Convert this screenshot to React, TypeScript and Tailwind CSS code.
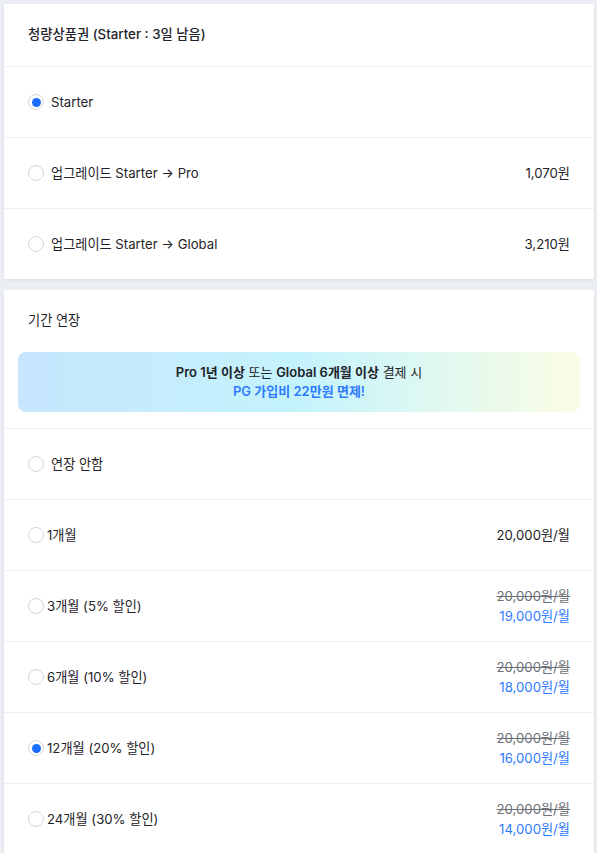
import React from 'react';

type Opt = { label: string; price?: string; original?: string; sale?: string; checked?: boolean; tight?: boolean };

const upgrades: Opt[] = [
  { label: 'Starter', checked: true },
  { label: '업그레이드 Starter → Pro', price: '1,070원' },
  { label: '업그레이드 Starter → Global', price: '3,210원' },
];

const periods: Opt[] = [
  { label: '연장 안함' },
  { label: '1개월', price: '20,000원/월', tight: true },
  { label: '3개월 (5% 할인)', original: '20,000원/월', sale: '19,000원/월', tight: true },
  { label: '6개월 (10% 할인)', original: '20,000원/월', sale: '18,000원/월', tight: true },
  { label: '12개월 (20% 할인)', original: '20,000원/월', sale: '16,000원/월', checked: true, tight: true },
  { label: '24개월 (30% 할인)', original: '20,000원/월', sale: '14,000원/월', tight: true },
];

const Radio = ({ checked }: { checked?: boolean }) => (
  <span className="flex h-4 w-4 shrink-0 items-center justify-center rounded-full border border-[#d4d8de] bg-white">
    {checked && <span className="h-[9px] w-[9px] rounded-full bg-[#1a6dff]" />}
  </span>
);

const Row = ({ o }: { o: Opt }) => (
  <div className="flex h-[71px] items-center justify-between border-t border-[#eceef1] px-6 text-[13.2px] leading-5">
    <div className={`flex items-center ${o.tight ? 'gap-[3px]' : 'gap-[7px]'}`}>
      <Radio checked={o.checked} />
      <span className="text-[#1f2329]">{o.label}</span>
    </div>
    {o.price && <span className="text-[#1f2329]">{o.price}</span>}
    {o.sale && (
      <div className="flex flex-col items-end">
        <span className="text-[#6b6f76] line-through">{o.original}</span>
        <span className="text-[#2f7bff]">{o.sale}</span>
      </div>
    )}
  </div>
);

export default function App() {
  return (
    <div
      className="min-h-screen bg-[#ebeef3] pl-1 pr-[3px] pt-1 pb-4"
      style={{ fontFamily: 'Inter, "Noto Sans CJK KR", sans-serif' }}
    >
      <section className="bg-white shadow-[0_1px_3px_rgba(0,0,0,0.08)]">
        <div className="flex h-[62px] items-center px-6">
          <span className="text-[13.3px] font-medium text-[#1f2329]">청량상품권 (Starter : 3일 남음)</span>
        </div>
        {upgrades.map((o) => (
          <Row key={o.label} o={o} />
        ))}
      </section>

      <section className="mt-[11px] bg-white shadow-[0_1px_3px_rgba(0,0,0,0.08)]">
        <div className="flex h-[62px] items-center px-6">
          <span className="text-[13.2px] text-[#1f2329]">기간 연장</span>
        </div>
        <div className="mx-[14px] mb-4 flex h-[60px] flex-col items-center justify-center rounded-lg bg-gradient-to-r from-[#c6e6fd] via-[#c4f3fc] to-[#fbfde4] text-[13px] leading-[19px]">
          <p className="text-[#1f2329]">
            <b className="font-semibold">Pro 1년 이상</b> 또는 <b className="font-semibold">Global 6개월 이상</b> 결제 시
          </p>
          <p className="font-semibold text-[#2f7bff]">PG 가입비 22만원 면제!</p>
        </div>
        {periods.map((o) => (
          <Row key={o.label} o={o} />
        ))}
      </section>
    </div>
  );
}
